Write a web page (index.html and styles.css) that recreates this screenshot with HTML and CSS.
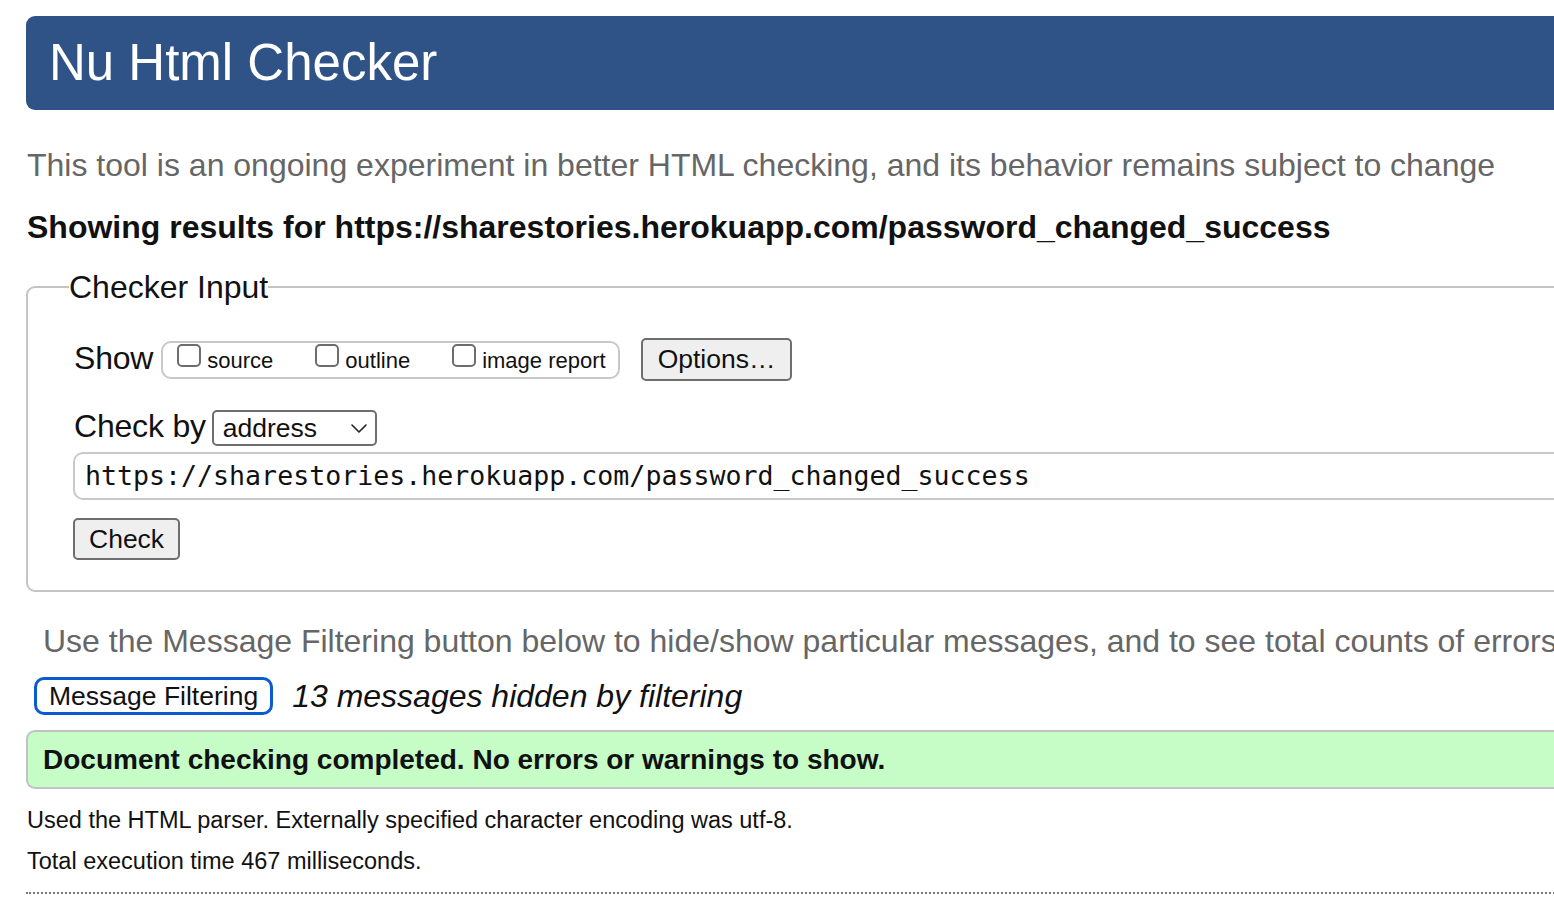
FILE: index.html
```html
<!DOCTYPE html>
<html lang="en">
<head>
<meta charset="utf-8">
<title>Showing results for https://sharestories.herokuapp.com/password_changed_success - Nu Html Checker</title>
<link rel="stylesheet" href="styles.css">
</head>
<body>
<div class="page">
  <header class="masthead">
    <h1 class="title">Nu Html Checker</h1>
  </header>

  <p class="intro">This tool is an ongoing experiment in better HTML checking, and its behavior remains subject to change</p>

  <p class="showing">Showing results for https://sharestories.herokuapp.com/password_changed_success</p>

  <form class="checker">
    <fieldset class="checker-fieldset">
      <legend class="checker-legend">Checker Input</legend>

      <div class="row show-row">
        <span class="row-label">Show</span>
        <div class="show-group">
          <label class="opt"><span class="box"></span><span class="opt-text">source</span></label>
          <label class="opt"><span class="box"></span><span class="opt-text">outline</span></label>
          <label class="opt"><span class="box"></span><span class="opt-text">image report</span></label>
        </div>
        <button type="button" class="btn options-btn">Options…</button>
      </div>

      <div class="row checkby-row">
        <span class="row-label">Check by</span>
        <div class="select">
          <span class="select-value">address</span>
          <svg class="chevron" width="16" height="9" viewBox="0 0 16 9" aria-hidden="true"><path d="M1 1 L8 8 L15 1" fill="none" stroke="#222" stroke-width="1.6" stroke-linecap="round" stroke-linejoin="round"/></svg>
        </div>
      </div>

      <div class="url-input">https://sharestories.herokuapp.com/password_changed_success</div>

      <div class="row submit-row">
        <button type="button" class="btn check-btn">Check</button>
      </div>
    </fieldset>
  </form>

  <p class="filter-note">Use the Message Filtering button below to hide/show particular messages, and to see total counts of errors and warnings.</p>

  <div class="filter-row">
    <button type="button" class="btn filter-btn">Message Filtering</button>
    <span class="hidden-count">13 messages hidden by filtering</span>
  </div>

  <p class="success">Document checking completed. No errors or warnings to show.</p>

  <p class="details">Used the HTML parser. Externally specified character encoding was utf-8.</p>
  <p class="details time">Total execution time 467 milliseconds.</p>

  <hr class="dotted">
</div>
</body>
</html>
```

FILE: styles.css
```css
html, body {
  margin: 0;
  padding: 0;
  overflow: hidden;
  background: #fff;
}

body {
  font-family: "Liberation Sans", Arial, Helvetica, sans-serif;
  color: #111;
}

.page {
  width: 1760px;
  margin-left: 26px;
  padding-top: 16px;
}

.masthead {
  background: #2f5387;
  height: 94px;
  border-radius: 9px 0 0 9px;
  display: flex;
  align-items: center;
  padding-left: 23px;
}

.title {
  margin: 0;
  color: #fff;
  font-weight: normal;
  font-size: 51px;
  line-height: 60px;
}

.intro {
  margin: 37px 0 0 1px;
  font-size: 32px;
  line-height: 36px;
  color: #666;
}

.showing {
  margin: 26px 0 0 1px;
  font-size: 32px;
  line-height: 36px;
  font-weight: bold;
  color: #111;
}

.checker {
  margin: 24px 0 0 0;
}

.checker-fieldset {
  margin: 0;
  border: 2px solid #c4c4c4;
  border-radius: 9px 0 0 9px;
  padding: 33px 0 30px 46px;
}

.checker-legend {
  font-size: 32px;
  line-height: 36px;
  padding: 0;
  margin-left: -5px;
  color: #111;
}

.row {
  display: flex;
  align-items: center;
}

.row-label {
  font-size: 32px;
  line-height: 36px;
  padding-bottom: 4px;
  letter-spacing: -0.2px;
}

.show-group {
  margin-left: 8px;
  height: 34px;
  border: 2px solid #c8c8c8;
  border-radius: 10px;
  display: flex;
  align-items: flex-start;
  padding: 0 12px 0 14px;
}

.opt {
  display: flex;
  align-items: flex-start;
  margin-right: 42px;
}

.opt:last-child {
  margin-right: 0;
}

.box {
  width: 20px;
  height: 19px;
  margin-top: 1px;
  border: 2px solid #6d6d6d;
  border-radius: 5px;
  background: #fff;
}

.opt-text {
  margin-left: 6px;
  font-size: 22px;
  line-height: 34px;
  padding-top: 1px;
}

.btn {
  font-family: "Liberation Sans", Arial, Helvetica, sans-serif;
  font-size: 26.5px;
  color: #111;
  background: #efefef;
  border: 2px solid #6e6e6e;
  border-radius: 5px;
  margin: 0;
  cursor: default;
}

.options-btn {
  margin-left: 21px;
  height: 43px;
  padding: 0 15px;
}

.checkby-row {
  margin-top: 27px;
}

.select {
  margin-left: 6px;
  height: 32px;
  border: 2px solid #6e6e6e;
  border-radius: 5px;
  display: flex;
  align-items: center;
  justify-content: space-between;
  padding: 0 8px 0 9px;
  box-sizing: content-box;
  width: 144px;
}

.select-value {
  font-size: 26.5px;
  line-height: 32px;
}

.chevron {
  display: block;
}

.url-input {
  margin-top: 4px;
  margin-left: -1px;
  height: 44px;
  border: 2px solid #c8c8c8;
  border-right: none;
  border-radius: 10px 0 0 10px;
  padding-left: 10px;
  font-family: "DejaVu Sans Mono", "Liberation Mono", monospace;
  font-size: 26.6px;
  line-height: 44px;
  color: #111;
}

.submit-row {
  margin-top: 18px;
  margin-left: -1px;
}

.check-btn {
  height: 42px;
  padding: 0 14px;
}

.filter-note {
  margin: 31px 0 0 17px;
  font-size: 32px;
  line-height: 36px;
  color: #666;
}

.filter-row {
  margin-top: 18px;
  margin-left: 8px;
  display: flex;
  align-items: center;
}

.filter-btn {
  height: 38px;
  padding: 0 12px;
  background: #fff;
  border: 3px solid #0b5bd0;
  border-radius: 10px;
  line-height: 30px;
}

.hidden-count {
  margin-left: 19px;
  font-size: 32px;
  line-height: 36px;
  font-style: italic;
  color: #111;
}

.success {
  margin: 15px 0 0 0;
  height: 55px;
  background: #c6fcc6;
  border: 2px solid #c2c2c2;
  border-right: none;
  border-radius: 9px 0 0 9px;
  padding-left: 15px;
  font-size: 28px;
  line-height: 55px;
  font-weight: bold;
  color: #111;
}

.details {
  margin: 17px 0 0 1px;
  font-size: 23.5px;
  line-height: 28px;
  color: #111;
}

.details.time {
  margin-top: 13px;
}

.dotted {
  margin: 17px 0 0 0;
  border: none;
  border-top: 2px dotted #7a7a7a;
  height: 0;
}
```
